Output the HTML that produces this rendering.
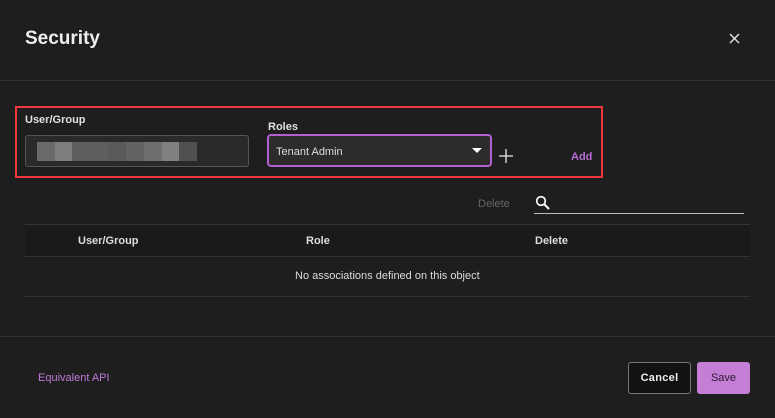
<!DOCTYPE html>
<html><head><meta charset="utf-8"><style>
*{box-sizing:border-box;margin:0;padding:0}
body{width:775px;height:418px;background:#1e1e1e;font-family:"Liberation Sans",sans-serif;color:#e6e6e6;position:relative;overflow:hidden}
.abs{position:absolute}
.title{left:25px;top:28px;font-size:19px;font-weight:bold;color:#eee}
.hr{left:0;width:775px;height:1px;background:#333}
.red{left:15px;top:106px;width:588px;height:72px;border:2px solid #f0383c}
.lbl{font-size:11px;font-weight:bold;color:#e0e0e0}
.inp{left:25px;top:135px;width:224px;height:32px;border:1px solid #555;border-radius:3px;background:#2a2a2a}
.blk{position:absolute;top:6px;height:19px}
.sel{left:267px;top:134px;width:225px;height:33px;border:2px solid #b15fd1;border-radius:4px;background:#2c2c2c;font-size:11px;color:#ddd;padding:10px 0 0 7px}
.sm{font-size:11px;font-weight:bold}
</style></head><body>
<div class="abs title">Security</div>
<svg class="abs" style="left:729px;top:33px" width="11" height="11"><path d="M1 1L10 10M10 1L1 10" stroke="#ddd" stroke-width="1.5"/></svg>
<div class="abs hr" style="top:80px"></div>
<div class="abs red"></div>
<div class="abs lbl" style="left:25px;top:114px">User/Group</div>
<div class="abs inp">
<div class="blk" style="left:11px;width:18px;background:#6a6a6a"></div>
<div class="blk" style="left:29px;width:17px;background:#7e7e7e"></div>
<div class="blk" style="left:46px;width:36px;background:#5f5f5f"></div>
<div class="blk" style="left:82px;width:18px;background:#5a5a5a"></div>
<div class="blk" style="left:100px;width:18px;background:#636363"></div>
<div class="blk" style="left:118px;width:18px;background:#6e6e6e"></div>
<div class="blk" style="left:136px;width:17px;background:#808080"></div>
<div class="blk" style="left:153px;width:18px;background:#505050"></div>
</div>
<div class="abs lbl" style="left:268px;top:121px">Roles</div>
<div class="abs sel">Tenant Admin</div>
<svg class="abs" style="left:472px;top:148px" width="10" height="6"><path d="M0 0H10L5 5Z" fill="#fff"/></svg>
<svg class="abs" style="left:498px;top:148px" width="16" height="16"><path d="M8 1V15M1 8H15" stroke="#eee" stroke-width="1.3"/></svg>
<div class="abs sm" style="left:571px;top:151px;color:#b76ed3">Add</div>
<div class="abs" style="left:478px;top:198px;font-size:11px;color:#666">Delete</div>
<svg class="abs" style="left:535px;top:195px" width="16" height="16"><circle cx="6" cy="6" r="4.3" fill="none" stroke="#fff" stroke-width="1.7"/><path d="M9 9L14 14" stroke="#fff" stroke-width="2"/></svg>
<div class="abs" style="left:534px;top:213px;width:210px;height:1px;background:#bbb"></div>
<div class="abs" style="left:25px;top:224px;width:725px;height:1px;background:#333"></div>
<div class="abs" style="left:25px;top:225px;width:725px;height:31px;background:#1a1a1a"></div>
<div class="abs" style="left:25px;top:256px;width:725px;height:1px;background:#333"></div>
<div class="abs sm" style="left:78px;top:235px;color:#ddd">User/Group</div>
<div class="abs sm" style="left:306px;top:235px;color:#ddd">Role</div>
<div class="abs sm" style="left:535px;top:235px;color:#ddd">Delete</div>
<div class="abs" style="left:295px;top:270px;font-size:11px;color:#ddd">No associations defined on this object</div>
<div class="abs" style="left:25px;top:296px;width:725px;height:1px;background:#333"></div>
<div class="abs hr" style="top:336px"></div>
<div class="abs sm" style="left:38px;top:372px;color:#c07ad8;font-weight:normal">Equivalent API</div>
<div class="abs" style="left:628px;top:362px;width:63px;height:32px;border:1px solid #777;border-radius:3px;background:#121212;font-size:11px;font-weight:bold;color:#eee;text-align:center;line-height:30px;letter-spacing:.3px">Cancel</div>
<div class="abs" style="left:697px;top:362px;width:53px;height:32px;border-radius:3px;background:#c47ed6;font-size:11px;color:#2a1a30;text-align:center;line-height:32px">Save</div>
</body></html>
